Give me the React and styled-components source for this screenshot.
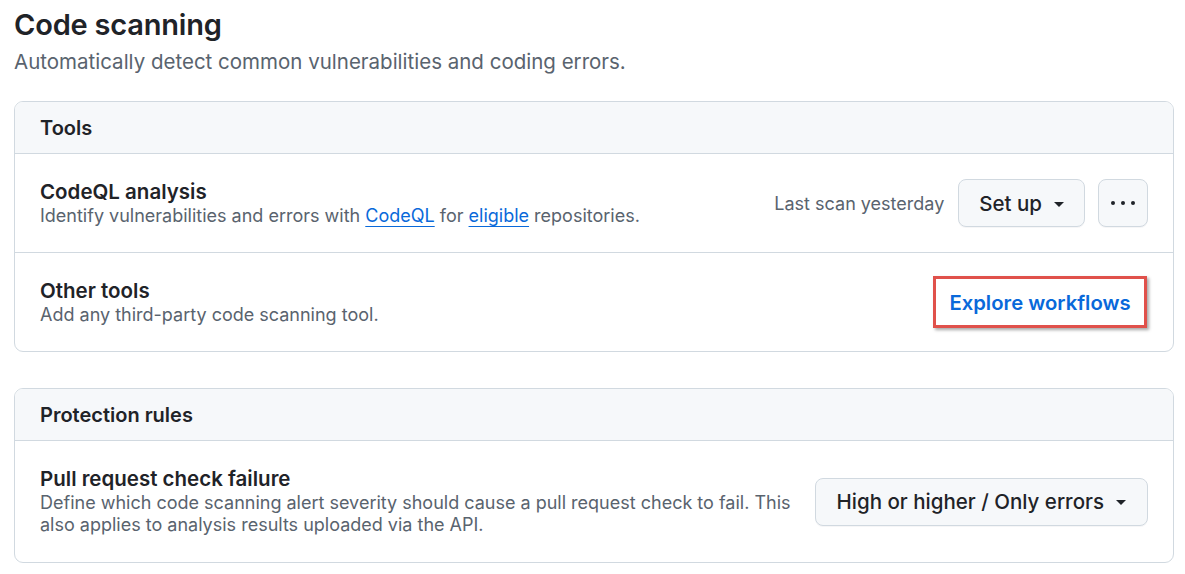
import React from "react";
import styled, { createGlobalStyle } from "styled-components";

const GlobalStyle = createGlobalStyle`
  body {
    margin: 0;
    background: #fff;
    font-family: Inter, "Liberation Sans", sans-serif;
    color: #1f2328;
  }
`;

const Page = styled.div`
  width: 1160px;
  padding: 7px 0 0 14px;
`;

const Title = styled.h1`
  margin: 0;
  font-size: 29px;
  line-height: 36px;
  font-weight: 600;
  letter-spacing: -0.2px;
`;

const Subtitle = styled.p`
  margin: 5px 0 0;
  font-size: 20.5px;
  line-height: 28px;
  color: #59636e;
`;

const Box = styled.section`
  border: 1px solid #d1d9e0;
  border-radius: 9px;
  margin-top: ${(p) => p.$top}px;
  overflow: hidden;
`;

const BoxHeader = styled.div`
  height: 51px;
  display: flex;
  align-items: center;
  padding: 0 25px;
  background: #f6f8fa;
  border-bottom: 1px solid #d1d9e0;
  font-size: 20px;
  font-weight: 600;
`;

const Row = styled.div`
  display: flex;
  align-items: center;
  justify-content: space-between;
  gap: 24px;
  height: ${(p) => p.$height}px;
  padding: 0 25px;
  & + & {
    border-top: 1px solid #d1d9e0;
  }
`;

const RowText = styled.div`
  max-width: 752px;
  min-width: 0;
`;

const RowTitle = styled.div`
  font-size: 20.5px;
  line-height: 24px;
  font-weight: 600;
`;

const RowDesc = styled.div`
  font-size: 18px;
  line-height: 22px;
  color: #59636e;
  margin-top: 1px;
`;

const InlineLink = styled.a`
  color: #0969da;
  text-decoration: underline;
  text-underline-offset: 4px;
  text-decoration-thickness: 1px;
`;

const Actions = styled.div`
  display: flex;
  align-items: center;
  gap: 13px;
  flex-shrink: 0;
`;

const Meta = styled.span`
  font-size: 18px;
  color: #59636e;
  margin-right: 1px;
`;

const Button = styled.button`
  display: flex;
  align-items: center;
  justify-content: center;
  flex-shrink: 0;
  gap: 12px;
  height: 48px;
  padding: 0 ${(p) => p.$pad}px;
  background: #f6f8fa;
  border: 1px solid #d1d9e0;
  border-radius: 8px;
  box-shadow: 0 1px 0 rgba(31, 35, 40, 0.04);
  font-family: inherit;
  font-size: 20.5px;
  font-weight: 500;
  white-space: nowrap;
  color: #1f2328;
  cursor: pointer;
`;

const IconButton = styled(Button)`
  width: 50px;
  padding: 0;
`;

const Caret = styled.span`
  width: 0;
  height: 0;
  border-left: 5px solid transparent;
  border-right: 5px solid transparent;
  border-top: 5px solid #1f2328;
  margin-top: 2px;
`;

const Dots = styled.span`
  display: flex;
  gap: 6px;
`;

const Dot = styled.span`
  width: 4px;
  height: 4px;
  border-radius: 50%;
  background: #1f2328;
`;

const Highlight = styled.div`
  display: flex;
  align-items: center;
  justify-content: center;
  flex-shrink: 0;
  width: 214px;
  height: 52px;
  box-sizing: border-box;
  border: 3px solid #e0514b;
  box-shadow: 2px 2px 3px rgba(0, 0, 0, 0.35);
  margin-right: 1px;
`;

const ActionLink = styled.a`
  color: #0969da;
  font-size: 20.3px;
  font-weight: 600;
  text-decoration: none;
  white-space: nowrap;
`;

export default function App() {
  return (
    <Page>
      <GlobalStyle />
      <Title>Code scanning</Title>
      <Subtitle>Automatically detect common vulnerabilities and coding errors.</Subtitle>

      <Box $top={25}>
        <BoxHeader>Tools</BoxHeader>
        <Row $height={98}>
          <RowText>
            <RowTitle>CodeQL analysis</RowTitle>
            <RowDesc>
              Identify vulnerabilities and errors with <InlineLink href="#">CodeQL</InlineLink> for{" "}
              <InlineLink href="#">eligible</InlineLink> repositories.
            </RowDesc>
          </RowText>
          <Actions>
            <Meta>Last scan yesterday</Meta>
            <Button $pad={20}>
              Set up <Caret />
            </Button>
            <IconButton>
              <Dots>
                <Dot />
                <Dot />
                <Dot />
              </Dots>
            </IconButton>
          </Actions>
        </Row>
        <Row $height={98}>
          <RowText>
            <RowTitle>Other tools</RowTitle>
            <RowDesc>Add any third-party code scanning tool.</RowDesc>
          </RowText>
          <Highlight>
            <ActionLink href="#">Explore workflows</ActionLink>
          </Highlight>
        </Row>
      </Box>

      <Box $top={36}>
        <BoxHeader>Protection rules</BoxHeader>
        <Row $height={121}>
          <RowText>
            <RowTitle>Pull request check failure</RowTitle>
            <RowDesc>
              Define which code scanning alert severity should cause a pull request check to fail. This
              also applies to analysis results uploaded via the API.
            </RowDesc>
          </RowText>
          <Button $pad={21}>
            High or higher / Only errors <Caret />
          </Button>
        </Row>
      </Box>
    </Page>
  );
}
